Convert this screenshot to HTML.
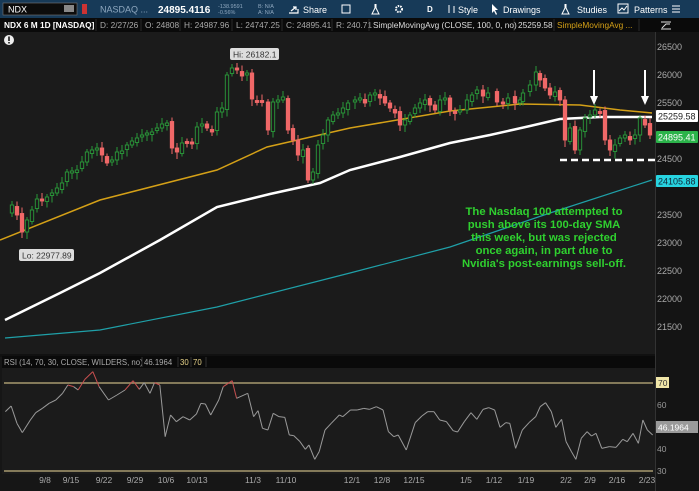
<!DOCTYPE html>
<html><head><meta charset="utf-8"><style>
body{margin:0;width:699px;height:491px;overflow:hidden;background:#151515;font-family:"Liberation Sans",sans-serif;}
svg{display:block}
</style></head><body>
<svg id="s" width="699" height="491" xmlns="http://www.w3.org/2000/svg" font-family="Liberation Sans, sans-serif">
<rect width="699" height="491" fill="#161616"/>
<rect x="0" y="0" width="699" height="18" fill="#173a58"/>
<rect x="3" y="3" width="74" height="12" fill="#0c0c0c" stroke="#777" stroke-width="0.6"/>
<text x="8" y="12.5" fill="#fff" font-size="9">NDX</text>
<rect x="64" y="5" width="10" height="7" fill="#888"/>
<rect x="82" y="4" width="5" height="10" fill="#c33"/>
<text x="100" y="12.5" fill="#8fa8bf" font-size="9">NASDAQ ...</text>
<text x="158" y="13" fill="#fff" font-size="10" font-weight="bold">24895.4116</text>
<text x="218" y="8" fill="#8fa8bf" font-size="5.5">-138.9591</text>
<text x="218" y="14" fill="#8fa8bf" font-size="5.5">-0.56%</text>
<text x="258" y="8" fill="#8fa8bf" font-size="5.5">B: N/A</text>
<text x="258" y="14" fill="#8fa8bf" font-size="5.5">A: N/A</text>
<path d="M289 13h9v-4M291 11l5-4m-3 0h3v3" stroke="#fff" fill="none" stroke-width="1.2"/>
<text x="303" y="13" fill="#fff" font-size="9">Share</text>
<rect x="342" y="5" width="8" height="8" fill="none" stroke="#fff"/>
<path d="M375 4v4l-3 6h7l-3-6V4" stroke="#fff" fill="none"/>
<circle cx="399" cy="9" r="3" fill="none" stroke="#fff" stroke-width="2" stroke-dasharray="1.5 1"/>
<text x="427" y="12" fill="#fff" font-size="8" font-weight="bold">D</text>
<path d="M449 5v8M454 6v7" stroke="#fff"/>
<text x="458" y="13" fill="#fff" font-size="9">Style</text>
<path d="M492 4l6 6h-3l2 4-1 1-2-4-2 2z" fill="#fff"/>
<text x="503" y="13" fill="#fff" font-size="9">Drawings</text>
<path d="M565 4v4l-3 6h7l-3-6V4" stroke="#fff" fill="none"/>
<text x="577" y="13" fill="#fff" font-size="9">Studies</text>
<rect x="618" y="4" width="10" height="9" fill="none" stroke="#fff"/>
<path d="M619 11l3-3 2 2 3-4" stroke="#fff" fill="none"/>
<text x="634" y="13" fill="#fff" font-size="9">Patterns</text>
<path d="M672 6h8M672 9h8M672 12h8" stroke="#fff"/>
<rect x="0" y="18" width="699" height="14" fill="#0a0a0a"/>
<g font-size="8.3" fill="#aaa">
<text x="4" y="28" fill="#fff" font-weight="bold">NDX 6 M 1D [NASDAQ]</text>
<text x="100" y="28">D: 2/27/26</text>
<text x="145" y="28">O: 24808</text>
<text x="184" y="28">H: 24987.96</text>
<text x="236" y="28">L: 24747.25</text>
<text x="286" y="28">C: 24895.41</text>
<text x="336" y="28">R: 240.71</text>
<text x="373" y="28" fill="#ddd">SimpleMovingAvg (CLOSE, 100, 0, no)</text>
<text x="518" y="28" fill="#ddd">25259.58</text>
<text x="557" y="28" fill="#d4a017">SimpleMovingAvg ...</text>
</g>
<g stroke="#333" stroke-width="0.8"><path d="M96 19v12M141 19v12M180 19v12M232 19v12M282 19v12M332 19v12M369 19v12M514 19v12M554 19v12M639 19v12"/></g>
<path d="M661 22h10M661 29h10M662 28l4-4 4 0" stroke="#ddd" fill="none"/>
<rect x="0" y="32" width="655" height="322" fill="#1b1b1b"/>
<rect x="655" y="32" width="44" height="459" fill="#141414"/>
<line x1="655.5" y1="32" x2="655.5" y2="491" stroke="#333"/>
<circle cx="9" cy="40" r="5" fill="#eee"/><rect x="8.2" y="36.5" width="1.6" height="4.5" fill="#1b1b1b"/><rect x="8.2" y="42" width="1.6" height="1.5" fill="#1b1b1b"/>
<g font-size="9" fill="#aaa">
<text x="657" y="50">26500</text><text x="657" y="78">26000</text><text x="657" y="106">25500</text>
<text x="657" y="162">24500</text><text x="657" y="218">23500</text><text x="657" y="246">23000</text>
<text x="657" y="274">22500</text><text x="657" y="302">22000</text><text x="657" y="330">21500</text>
</g>
<g id="mas"></g>
<g id="cd"></g>
<path d="M560 160H655" stroke="#fff" stroke-width="2.5" stroke-dasharray="7 4"/>
<path d="M594 70v28" stroke="#fff" stroke-width="2"/><path d="M590 96l4 9 4-9z" fill="#fff"/>
<path d="M645 70v28" stroke="#fff" stroke-width="2"/><path d="M641 96l4 9 4-9z" fill="#fff"/>
<rect x="656" y="110" width="42" height="12" fill="#fff" rx="1"/><text x="658" y="119.5" font-size="9" fill="#222">25259.58</text>
<rect x="656" y="131" width="42" height="12" fill="#2bb34a" rx="1"/><text x="658" y="140.5" font-size="9" fill="#fff">24895.41</text>
<rect x="656" y="175" width="42" height="12" fill="#27d4e0" rx="1"/><text x="658" y="184.5" font-size="9" fill="#123">24105.88</text>
<rect x="230" y="48" width="49" height="12" fill="#ddd" rx="2"/><text x="233" y="57.5" font-size="8.5" fill="#333">Hi: 26182.1</text>
<rect x="19" y="249" width="55" height="12" fill="#ddd" rx="2"/><text x="22" y="258.5" font-size="8.5" fill="#333">Lo: 22977.89</text>
<g font-size="11.3" font-weight="bold" fill="#2fd02f" text-anchor="middle">
<text x="544" y="215">The Nasdaq 100 attempted to</text>
<text x="544" y="228">push above its 100-day SMA</text>
<text x="544" y="241">this week, but was rejected</text>
<text x="544" y="254">once again, in part due to</text>
<text x="544" y="267">Nvidia's post-earnings sell-off.</text>
</g>
<rect x="0" y="354" width="655" height="3" fill="#111"/>
<rect x="2" y="356" width="653" height="12" fill="#0a0a0a"/>
<g font-size="7.8" fill="#aaa"><text x="4" y="365">RSI (14, 70, 30, CLOSE, WILDERS, no)</text><text x="144" y="365">46.1964</text>
<text x="180" y="365" fill="#e8d48a">30</text><text x="193" y="365" fill="#e8d48a">70</text></g>
<path d="M142 357v10M178 357v10M191 357v10M206 357v10" stroke="#333"/>
<rect x="2" y="368" width="653" height="106" fill="#1b1b1b"/>
<path d="M4 383H653M4 471H653" stroke="#a89a70" stroke-width="1.5"/>
<g id="rsi"></g>
<g font-size="8.5" fill="#999"><text x="657" y="408">60</text><text x="657" y="430">50</text><text x="657" y="452">40</text><text x="657" y="474">30</text></g>
<rect x="656" y="377" width="13" height="11" fill="#f0e6a8"/><text x="658" y="386" font-size="8.5" fill="#333">70</text>
<rect x="656" y="421" width="42" height="12" fill="#9a9a9a"/><text x="658" y="430.5" font-size="8.5" fill="#fff">46.1964</text>
<g font-size="8.5" fill="#aaa" text-anchor="middle">
<text x="45" y="483">9/8</text><text x="71" y="483">9/15</text><text x="104" y="483">9/22</text><text x="135" y="483">9/29</text>
<text x="166" y="483">10/6</text><text x="197" y="483">10/13</text><text x="253" y="483">11/3</text><text x="286" y="483">11/10</text>
<text x="352" y="483">12/1</text><text x="382" y="483">12/8</text><text x="414" y="483">12/15</text><text x="466" y="483">1/5</text>
<text x="494" y="483">1/12</text><text x="526" y="483">1/19</text><text x="566" y="483">2/2</text><text x="590" y="483">2/9</text>
<text x="617" y="483">2/16</text><text x="647" y="483">2/23</text>
</g>
</svg>
<script>
var NS="http://www.w3.org/2000/svg";
function el(p,t,a){var e=document.createElementNS(NS,t);for(var k in a)e.setAttribute(k,a[k]);document.getElementById(p).appendChild(e);return e;}
function pl(pts){return "M"+pts.map(function(p){return p[0]+" "+p[1]}).join("L");}
el("mas","path",{d:pl([[0,240],[100,200],[217,170],[267,147],[350,128],[450,111],[520,104],[580,105],[620,110],[652,113]]),"stroke":"#d4a017","stroke-width":1.5,"fill":"none"});
el("mas","path",{d:pl([[5,320],[60,293],[100,273],[160,240],[217,207],[270,194],[320,183],[350,170],[400,157],[450,143],[490,135],[530,126],[560,119],[600,117],[652,117]]),"stroke":"#fff","stroke-width":2.5,"fill":"none"});
el("mas","path",{d:pl([[5,338],[100,330],[217,307],[350,273],[450,247],[550,213],[652,180]]),"stroke":"#1fa0a8","stroke-width":1.2,"fill":"none"});
var c=[[6,213],[12,205],[17,215],[22,232],[27,220],[32,210],[37,199],[42,200],[47,197],[52,193],[57,188],[62,183],[67,172],[72,171],[77,170],[82,162],[87,152],[92,150],[97,148],[102,155],[107,163],[112,160],[117,152],[122,151],[127,145],[132,141],[137,138],[142,135],[147,133],[152,132],[157,128],[162,124],[167,123],[172,148],[177,152],[182,143],[187,142],[192,142],[197,127],[202,124],[207,128],[212,132],[217,112],[222,108],[227,75],[232,68],[237,70],[242,76],[247,73],[252,99],[257,102],[262,102],[268,130],[273,102],[278,100],[283,97],[288,130],[293,140],[298,155],[303,150],[308,180],[313,172],[318,145],[323,135],[328,120],[333,115],[338,113],[343,108],[348,103],[355,100],[360,98],[365,103],[370,95],[375,93],[380,98],[385,103],[390,108],[395,113],[400,125],[405,120],[410,115],[415,108],[420,103],[425,100],[430,105],[435,110],[440,100],[445,98],[450,110],[455,112],[460,110],[467,100],[472,95],[477,90],[483,96],[488,93],[497,102],[503,102],[508,98],[515,103],[520,100],[523,93],[530,85],[536,72],[540,80],[545,88],[550,95],[555,92],[560,100],[565,140],[570,128],[575,150],[580,130],[585,118],[590,115],[595,110],[600,112],[605,140],[610,150],[615,145],[620,138],[625,135],[630,140],[635,135],[640,118],[645,125],[650,135]];
for(var i=1;i<c.length;i++){var o=c[i-1][1]+(i%3-1)*1.5,cl=c[i][1],x=c[i][0],up=cl<o;
var t=Math.min(o,cl),b=Math.max(o,cl);if(b-t<2)b=t+2;var col=up?"#2a9a3a":"#f06868";
el("cd","line",{"x1":x,"x2":x,"y1":t-3-(i%4),"y2":b+3+(i%5),"stroke":col,"stroke-width":1});
el("cd","rect",{"x":x-1.7,"y":t,"width":3.4,"height":b-t,"fill":up?"#1b1b1b":col,"stroke":col,"stroke-width":0.9});}
var r=[[12,215],[25,198],[38,250],[50,278],[68,240],[80,218],[95,205],[110,190],[125,180],[140,160],[152,135],[165,140],[175,150],[190,118],[208,95],[222,140],[243,180],[262,165],[280,150],[298,122],[312,148],[323,128],[336,160],[346,128],[358,135],[370,290],[382,225],[395,245],[410,230],[425,240],[440,222],[450,190],[460,192],[472,225],[490,180],[500,140],[520,122],[530,175],[555,160],[568,230],[578,212],[588,265],[600,270],[612,220],[625,230],[638,232],[648,285],[658,287],[672,305],[684,328],[692,315],[705,358],[715,335],[728,270],[742,250],[760,225],[768,230],[785,210],[800,210],[815,205],[828,208],[843,200],[858,210],[870,275],[882,290],[892,285],[910,330],[930,248],[945,228],[958,215],[972,215],[985,240],[1000,245],[1015,272],[1025,276],[1040,245],[1055,218],[1068,238],[1082,208],[1095,203],[1108,210],[1120,262],[1133,248],[1142,250],[1155,325],[1170,270],[1185,248],[1200,230],[1210,200],[1222,188],[1235,215],[1245,262],[1258,238],[1268,305],[1280,335],[1290,358],[1302,295],[1315,275],[1325,288],[1335,280],[1348,325],[1365,320],[1380,322],[1395,298],[1405,305],[1418,280],[1430,310],[1440,240],[1450,270],[1462,285]];
for(var j=1;j<r.length;j++){var a=r[j-1],b2=r[j];var red=(a[1]<=140&&b2[1]<=140)||(a[1]<128||b2[1]<128);
el("rsi","line",{"x1":a[0]/2.24,"y1":a[1]/3+340,"x2":b2[0]/2.24,"y2":b2[1]/3+340,"stroke":red?"#c85050":"#9a9a9a","stroke-width":1});}
</script>
</body></html>
